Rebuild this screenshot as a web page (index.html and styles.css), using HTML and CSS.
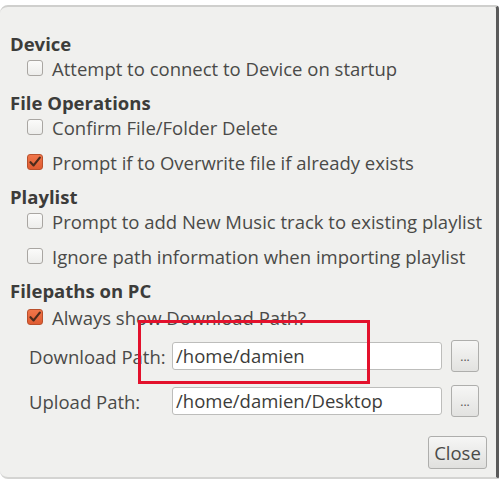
FILE: index.html
```html
<!DOCTYPE html>
<html>
<head>
<meta charset="utf-8">
<link rel="stylesheet" href="styles.css">
</head>
<body>
<div class="dialog">
  <div class="group">
    <div class="heading">Device</div>
    <label class="check"><span class="box"></span><span>Attempt to connect to Device on startup</span></label>
  </div>
  <div class="group">
    <div class="heading">File Operations</div>
    <label class="check"><span class="box"></span><span>Confirm File/Folder Delete</span></label>
    <label class="check"><span class="box on"><svg viewBox="0 0 16 16" width="16" height="16"><path d="M3.5 8.2 L6.6 11.4 L12.8 3.6" fill="none" stroke="#4b2b1c" stroke-width="2.2" stroke-linecap="round" stroke-linejoin="round"/></svg></span><span>Prompt if to Overwrite file if already exists</span></label>
  </div>
  <div class="group">
    <div class="heading">Playlist</div>
    <label class="check"><span class="box"></span><span>Prompt to add New Music track to existing playlist</span></label>
    <label class="check"><span class="box"></span><span>Ignore path information when importing playlist</span></label>
  </div>
  <div class="group last">
    <div class="heading">Filepaths on PC</div>
    <label class="check"><span class="box on"><svg viewBox="0 0 16 16" width="16" height="16"><path d="M3.5 8.2 L6.6 11.4 L12.8 3.6" fill="none" stroke="#4b2b1c" stroke-width="2.2" stroke-linecap="round" stroke-linejoin="round"/></svg></span><span>Always show Download Path?</span></label>
    <div class="paths">
      <div class="path-row">
        <span class="plabel">Download Path:</span>
        <div class="field">/home/damien</div>
        <div class="dots">...</div>
      </div>
      <div class="path-row">
        <span class="plabel">Upload Path:</span>
        <div class="field">/home/damien/Desktop</div>
        <div class="dots">...</div>
      </div>
    </div>
  </div>
  <div class="footer">
    <div class="btn">Close</div>
  </div>
  <div class="highlight"></div>
</div>
</body>
</html>
```
FILE: styles.css
```css
html, body {
  margin: 0;
  padding: 0;
  background: #ffffff;
}
body {
  width: 500px;
  height: 480px;
  overflow: hidden;
  font-family: "Open Sans", "Noto Sans", sans-serif;
  font-size: 18.5px;
  color: #4a4a48;
}
.dialog {
  position: relative;
  margin-top: 5px;
  width: 499px;
  height: 474px;
  box-sizing: border-box;
  background: #f0f0ee;
  border-top: 2px solid #cfcfcd;
  border-right: 3px solid #5a5a5a;
  border-bottom: 2px solid #d4d4d2;
  border-radius: 8px 4px 2px 8px;
  padding: 25px 0 0 10px;
}
.group {
  display: flex;
  flex-direction: column;
  gap: 10px;
  margin-bottom: 11px;
}
.group + .group {
  margin-top: 0;
}
.group.last {
  margin-top: 1px;
  gap: 12px;
}
.heading {
  font-weight: 700;
  height: 24px;
  line-height: 24px;
  color: #3c3c3a;
  margin-bottom: -10px;
}
.check {
  display: flex;
  align-items: center;
  height: 24px;
  margin-left: 17px;
  gap: 9px;
}
.group .check + .check {
  margin-top: 1px;
}
.box {
  width: 16px;
  height: 16px;
  box-sizing: border-box;
  border: 1px solid #a9a6a2;
  border-radius: 3px;
  background: linear-gradient(#fbfbfa, #ededeb);
  flex: none;
  display: flex;
}
.box.on {
  background: linear-gradient(#f0764a, #df5b31);
  border-color: #b9502c;
}
.box svg {
  margin: -1px;
}
.paths {
  display: flex;
  flex-direction: column;
  gap: 17px;
  margin-left: 19px;
  margin-top: 1px;
}
.path-row {
  display: flex;
  align-items: center;
  height: 28px;
}
.plabel {
  width: 143px;
  flex: none;
}
.field {
  width: 270px;
  height: 28px;
  box-sizing: border-box;
  background: #ffffff;
  border: 1px solid #bdbdbb;
  border-radius: 3px;
  padding-left: 3px;
  line-height: 26px;
  color: #3c3c3a;
  flex: none;
}
.dots {
  margin-left: 9px;
  width: 28px;
  height: 32px;
  flex: none;
  box-sizing: border-box;
  border: 1px solid #aeaeac;
  border-radius: 3px;
  background: linear-gradient(#f6f6f5, #e2e2e0);
  text-align: center;
  font-size: 12px;
  line-height: 32px;
  color: #555;
}
.footer {
  display: flex;
  justify-content: flex-end;
  padding-right: 9px;
  margin-top: 21px;
}
.btn {
  width: 59px;
  height: 33px;
  box-sizing: border-box;
  border: 1px solid #aeaeac;
  border-radius: 3px;
  background: linear-gradient(#f6f6f5, #e0e0de);
  text-align: center;
  line-height: 31px;
  color: #4a4a48;
}
.highlight {
  position: absolute;
  left: 138px;
  top: 313px;
  width: 232px;
  height: 64px;
  box-sizing: border-box;
  border: 3px solid #e3112c;
}
```
